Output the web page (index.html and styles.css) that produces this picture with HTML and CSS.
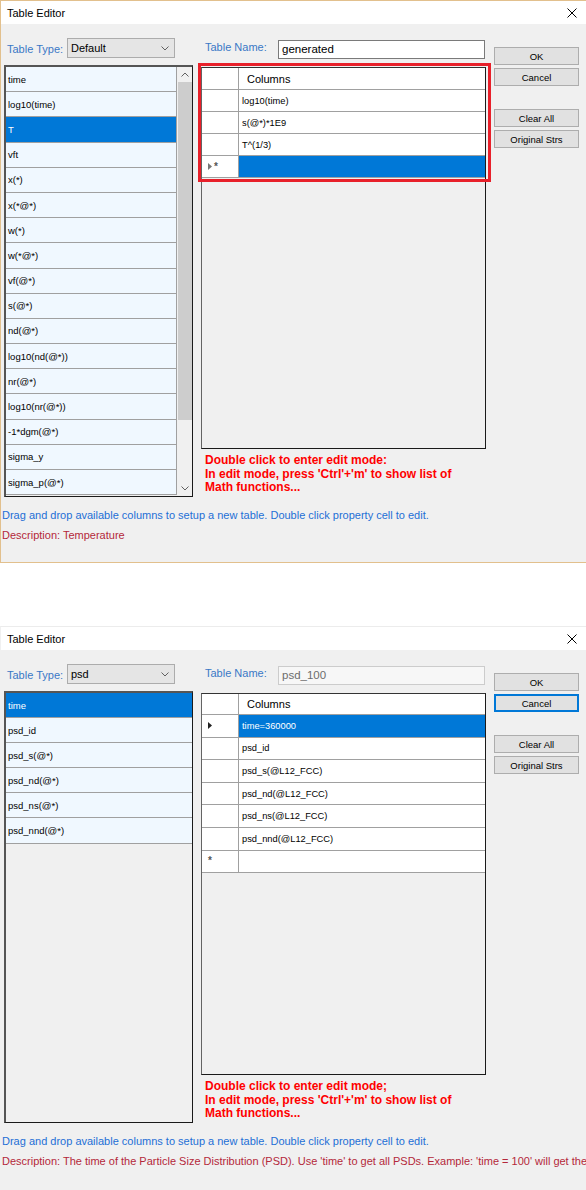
FILE: index.html
```html
<!DOCTYPE html>
<html>
<head>
<meta charset="utf-8">
<title>Table Editor</title>
<link rel="stylesheet" href="styles.css">
</head>
<body>
<div class="win win-a">
  <div class="titlebar">
    <span class="title">Table Editor</span>
    <svg class="close" width="10" height="10" viewBox="0 0 10 10"><path d="M0.5 0.5 L9.5 9.5 M9.5 0.5 L0.5 9.5" stroke="#000" stroke-width="1" fill="none"/></svg>
  </div>
  <div class="winbody body-a">
    <div class="main">
      <div class="col-left">
        <div class="hdr">
          <span class="lbl lbl-type">Table Type:</span>
          <div class="combo"><span>Default</span><svg class="chev" width="8" height="5" viewBox="0 0 8 5"><path d="M0.5 0.5 L4 4 L7.5 0.5" stroke="#606060" fill="none"/></svg></div>
        </div>
        <div class="list">
          <div class="items items-a">
            <div class="item">time</div>
            <div class="item">log10(time)</div>
            <div class="item sel">T</div>
            <div class="item">vft</div>
            <div class="item">x(*)</div>
            <div class="item">x(*@*)</div>
            <div class="item">w(*)</div>
            <div class="item">w(*@*)</div>
            <div class="item">vf(@*)</div>
            <div class="item">s(@*)</div>
            <div class="item">nd(@*)</div>
            <div class="item">log10(nd(@*))</div>
            <div class="item">nr(@*)</div>
            <div class="item">log10(nr(@*))</div>
            <div class="item">-1*dgm(@*)</div>
            <div class="item">sigma_y</div>
            <div class="item">sigma_p(@*)</div>
          </div>
          <div class="vscroll">
            <div class="arrow"><svg width="8" height="5" viewBox="0 0 8 5"><path d="M0.5 4.5 L4 1 L7.5 4.5" stroke="#606060" fill="none"/></svg></div>
            <div class="track"><div class="thumb"></div></div>
            <div class="arrow"><svg width="8" height="5" viewBox="0 0 8 5"><path d="M0.5 0.5 L4 4 L7.5 0.5" stroke="#606060" fill="none"/></svg></div>
          </div>
        </div>
      </div>
      <div class="col-mid">
        <div class="hdr">
          <span class="lbl lbl-name">Table Name:</span>
          <div class="textbox">generated</div>
        </div>
        <div class="grid">
          <div class="grow ghead"><div class="rh"></div><div class="cell">Columns</div></div>
          <div class="grow"><div class="rh"></div><div class="cell">log10(time)</div></div>
          <div class="grow"><div class="rh"></div><div class="cell">s(@*)*1E9</div></div>
          <div class="grow"><div class="rh"></div><div class="cell">T^(1/3)</div></div>
          <div class="grow"><div class="rh"><svg class="tri" width="4" height="7" viewBox="0 0 4 7"><path d="M0 0 L4 3.5 L0 7 Z" fill="#777"/></svg><span class="star">*</span></div><div class="cell csel"></div></div>
          <div class="highlight"></div>
        </div>
        <div class="notes">Double click to enter edit mode:<br>In edit mode, press 'Ctrl'+'m' to show list of<br>Math functions...</div>
      </div>
      <div class="col-btn">
        <div class="btn">OK</div>
        <div class="btn">Cancel</div>
        <div class="btn gap">Clear All</div>
        <div class="btn">Original Strs</div>
      </div>
    </div>
    <p class="help">Drag and drop available columns to setup a new table. Double click property cell to edit.</p>
    <p class="desc">Description: Temperature</p>
  </div>
</div>

<div class="spacer"></div>

<div class="win win-b">
  <div class="titlebar">
    <span class="title">Table Editor</span>
    <svg class="close" width="10" height="10" viewBox="0 0 10 10"><path d="M0.5 0.5 L9.5 9.5 M9.5 0.5 L0.5 9.5" stroke="#000" stroke-width="1" fill="none"/></svg>
  </div>
  <div class="winbody body-b">
    <div class="main">
      <div class="col-left">
        <div class="hdr">
          <span class="lbl lbl-type">Table Type:</span>
          <div class="combo"><span>psd</span><svg class="chev" width="8" height="5" viewBox="0 0 8 5"><path d="M0.5 0.5 L4 4 L7.5 0.5" stroke="#606060" fill="none"/></svg></div>
        </div>
        <div class="list">
          <div class="items items-b">
            <div class="item sel">time</div>
            <div class="item">psd_id</div>
            <div class="item">psd_s(@*)</div>
            <div class="item">psd_nd(@*)</div>
            <div class="item">psd_ns(@*)</div>
            <div class="item">psd_nnd(@*)</div>
          </div>
        </div>
      </div>
      <div class="col-mid">
        <div class="hdr">
          <span class="lbl lbl-name">Table Name:</span>
          <div class="textbox disabled">psd_100</div>
        </div>
        <div class="grid grid-b">
          <div class="grow ghead"><div class="rh"></div><div class="cell">Columns</div></div>
          <div class="grow"><div class="rh"><svg class="tri" width="4" height="7" viewBox="0 0 4 7"><path d="M0 0 L4 3.5 L0 7 Z" fill="#222"/></svg></div><div class="cell csel">time=360000</div></div>
          <div class="grow"><div class="rh"></div><div class="cell">psd_id</div></div>
          <div class="grow"><div class="rh"></div><div class="cell">psd_s(@L12_FCC)</div></div>
          <div class="grow"><div class="rh"></div><div class="cell">psd_nd(@L12_FCC)</div></div>
          <div class="grow"><div class="rh"></div><div class="cell">psd_ns(@L12_FCC)</div></div>
          <div class="grow"><div class="rh"></div><div class="cell">psd_nnd(@L12_FCC)</div></div>
          <div class="grow"><div class="rh"><span class="star">*</span></div><div class="cell"></div></div>
        </div>
        <div class="notes">Double click to enter edit mode;<br>In edit mode, press 'Ctrl'+'m' to show list of<br>Math functions...</div>
      </div>
      <div class="col-btn">
        <div class="btn">OK</div>
        <div class="btn focus">Cancel</div>
        <div class="btn gap">Clear All</div>
        <div class="btn">Original Strs</div>
      </div>
    </div>
    <p class="help">Drag and drop available columns to setup a new table. Double click property cell to edit.</p>
    <p class="desc">Description: The time of the Particle Size Distribution (PSD). Use 'time' to get all PSDs. Example: 'time = 100' will get the</p>
  </div>
</div>
</body>
</html>
```

FILE: styles.css
```css
* { box-sizing: border-box; margin: 0; padding: 0; }
html, body { background: #fff; }
body {
  width: 586px;
  height: 1190px;
  overflow: hidden;
  font-family: "Liberation Sans", Arial, sans-serif;
  font-size: 11px;
  color: #000;
}

.win { width: 586px; overflow: hidden; }
.win-a { height: 563px; border: 1px solid #e2c08d; border-right: 0; }
.win-b { height: 564px; border-top: 1px solid #ececec; border-left: 1px solid #f0f0f0; }
.spacer { height: 63px; background: #fff; }

.titlebar {
  height: 23px;
  background: #fff;
  display: flex;
  align-items: center;
  justify-content: space-between;
  padding: 1px 9px 0 6px;
}
.title { font-size: 11px; color: #000; }

.winbody {
  background: #f0f0f0;
  padding: 14px 0 0 3px;
}
.body-a { height: 538px; }
.body-b { height: 540px; }

.main { display: flex; gap: 8px; align-items: flex-start; }

.col-left { width: 189px; }
.col-mid { width: 285px; }
.col-btn { width: 85px; padding-top: 9px; display: flex; flex-direction: column; gap: 3px; }

.hdr { height: 20px; display: flex; align-items: flex-start; }
.lbl { color: #3a78c6; line-height: 20px; }
.lbl-type { width: 63px; padding-left: 3px; line-height: 22px; }
.lbl-name { width: 77px; padding-left: 4px; line-height: 18px; }

.combo {
  width: 108px;
  height: 20px;
  background: #e5e5e5;
  border: 1px solid #acacac;
  display: flex;
  align-items: center;
  justify-content: space-between;
  padding: 0 5px 0 3px;
}
.chev { display: block; }

.textbox {
  margin-top: 2px;
  width: 207px;
  height: 19px;
  background: #fff;
  border: 1px solid #7a7a7a;
  padding-left: 3px;
  font-size: 11.5px;
  line-height: 17px;
}
.textbox.disabled { background: #f7f7f7; border-color: #cccccc; color: #6d6d6d; }

.list {
  margin-top: 7px;
  height: 432px;
  display: flex;
  border-style: solid;
  border-width: 2px 1px 1px 2px;
  border-color: #555 #1a1a1a #1a1a1a #555;
  background: #f0f0f0;
}
.items { flex: 1; overflow: hidden; }
.item {
  background: #f0f8ff;
  border-bottom: 1px solid #a0a0a0;
  padding-left: 2px;
  font-size: 9.5px;
  display: flex;
  align-items: center;
}
.items-a .item { height: 25.2px; border-right: 1px solid #a0a0a0; }
.items-b .item { height: 25.1px; }
.item.sel { background: #0078d7; color: #fff; }

.vscroll { width: 15px; display: flex; flex-direction: column; background: #f0f0f0; }
.arrow { height: 15px; display: flex; align-items: center; justify-content: center; }
.track { flex: 1; }
.thumb { height: 338px; background: #cdcdcd; margin: 0 0 0 1px; }

.grid {
  position: relative;
  margin-top: 9px;
  height: 382px;
  border: 1px solid #1a1a1a;
  border-left-color: #646464;
  border-top-color: #333;
  background: #f0f0f0;
}
.grow { display: flex; height: 22px; background: #fff; border-bottom: 1px solid #a0a0a0; }
.grid-b .grow { height: 22.6px; }
.grid-b .ghead { height: 21px; }
.rh {
  width: 37px;
  border-right: 1px solid #a0a0a0;
  display: flex;
  align-items: center;
  padding-left: 6px;
  gap: 2px;
}
.tri { display: block; }
.star { font-size: 10px; font-weight: bold; color: #555; line-height: 10px; }
.cell {
  flex: 1;
  display: flex;
  align-items: center;
  padding-left: 3px;
  font-size: 9.3px;
}
.ghead .cell { font-size: 11px; padding-left: 8px; }
.csel { background: #0078d7; color: #fff; }

.highlight {
  position: absolute;
  left: -4px;
  top: -5px;
  width: 293px;
  height: 119px;
  border: 3px solid #e8202a;
}

.notes {
  margin-top: 5px;
  padding-left: 4px;
  color: #ff0000;
  font-weight: bold;
  font-size: 12px;
  line-height: 13.5px;
}

.btn {
  height: 18px;
  background: #e1e1e1;
  border: 1px solid #adadad;
  font-size: 9.5px;
  display: flex;
  align-items: center;
  justify-content: center;
}
.btn.gap { margin-top: 20px; }
.btn.focus { border: 2px solid #0078d7; }

.help {
  margin-top: 11px;
  margin-left: -2px;
  color: #1e6fd6;
  line-height: 14px;
  white-space: nowrap;
}
.desc {
  margin-top: 6px;
  margin-left: -2px;
  color: #b4283a;
  line-height: 14px;
  white-space: nowrap;
}
```
